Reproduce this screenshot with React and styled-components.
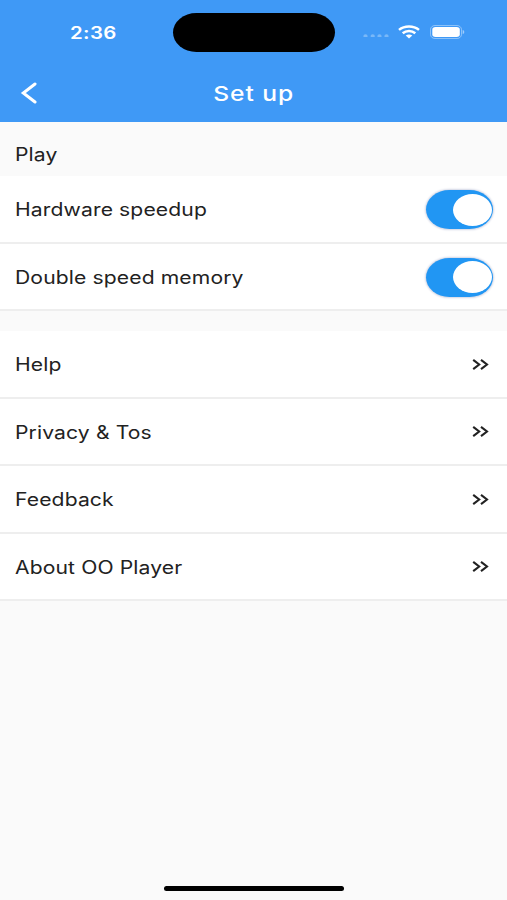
import { useState } from 'react';
import styled, { createGlobalStyle } from 'styled-components';

const GlobalStyle = createGlobalStyle`
    * {
        box-sizing: border-box;
    }
    body {
        margin: 0;
        background: #fafafa;
        font-family: Inter, "Liberation Sans", sans-serif;
    }
`;
const Page = styled.div`
    display: flex;
    flex-direction: column;
    width: 507px;
    height: 900px;
    overflow: hidden;
    background: #fafafa;
    color: #222;
`;
const Header = styled.header`
    display: flex;
    flex-direction: column;
    flex: none;
    height: 122px;
    background: #3f99f6;
    color: #fff;
`;
const StatusBar = styled.div`
    display: grid;
    grid-template-columns: 173px 162px 1fr;
    align-items: center;
    height: 64px;
`;
const Island = styled.div`
    height: 39px;
    border-radius: 24px / 20px;
    background: #000;
`;
const StatusIcons = styled.div`
    display: flex;
    align-items: center;
    padding-left: 28px;
`;
const NavBar = styled.div`
    display: grid;
    grid-template-columns: 60px 1fr 60px;
    align-items: center;
    height: 58px;
`;
const BackButton = styled.button`
    display: flex;
    padding: 0 0 0 20px;
    border: 0;
    background: none;
    color: inherit;
`;
// wide lettering, the same glyphs pulled out sideways
const Wide = styled.span`
    display: inline-block;
    padding-top: 1px;
    white-space: nowrap;
    font-size: ${({ $size }) => $size || 18}px;
    font-weight: ${({ $weight }) => $weight || 400};
    line-height: 24px;
    letter-spacing: ${({ $spacing }) => $spacing || 0.1}px;
    transform: scaleX(${({ $stretch }) => $stretch || 1.173});
    transform-origin: ${({ $origin }) => $origin || 'left'} center;
`;
const Time = styled.div`
    padding-left: 70px;
`;
const Title = styled.h1`
    display: flex;
    justify-content: center;
    margin: 0;
`;
const SectionTitle = styled.div`
    display: flex;
    align-items: center;
    flex: none;
    height: 54px;
    padding: 10px 15px 0;
`;
const List = styled.ul`
    flex: none;
    margin: 0 0 20px;
    padding: 0;
    list-style: none;
    background: #fff;
`;
const Row = styled.li`
    display: flex;
    align-items: center;
    justify-content: space-between;
    height: 67.5px;
    padding: 2px 14px 0 15px;
    border-bottom: 2px solid #eee;
`;
const Switch = styled.button`
    display: flex;
    align-items: center;
    justify-content: ${({ $on }) => ($on ? 'flex-end' : 'flex-start')};
    width: 67px;
    height: 39px;
    padding: 0 1px;
    border: 0;
    border-radius: 24px / 20px;
    background: ${({ $on }) => ($on ? '#2196f3' : '#ccc')};
    box-shadow: 0 0 2px 1px #d0d4e4;
`;
const Knob = styled.span`
    width: 39px;
    height: 32px;
    border-radius: 50%;
    background: #fff;
`;
const HomeIndicator = styled.div`
    flex: none;
    align-self: center;
    width: 180px;
    height: 5px;
    margin: auto 0 9px;
    border-radius: 3px;
    background: #000;
`;

const Signal = () => (
    <svg width="28" height="10" viewBox="0 0 28 10" fill="#fff" opacity="0.3">
        <ellipse cx="2.5" cy="9" rx="2.1" ry="1.8" />
        <ellipse cx="9.7" cy="9" rx="2.1" ry="1.8" />
        <ellipse cx="16.5" cy="9" rx="2.1" ry="1.8" />
        <ellipse cx="23.5" cy="9" rx="2.1" ry="1.8" />
    </svg>
);

const Wifi = () => (
    <svg width="22" height="14" viewBox="0 0 22 14" style={{ marginLeft: 7 }}>
        <g fill="none" stroke="#fff" strokeWidth="2.5">
            <path d="M1 4.9C6.5 .3 15.5 .3 21 4.9" />
            <path d="M4.7 8.3C8.2 5.2 13.8 5.2 17.3 8.3" />
        </g>
        <path d="M7.7 10.6C9.5 9 12.5 9 14.3 10.6L11 13.6Z" fill="#fff" />
    </svg>
);

const Battery = () => (
    <svg width="36" height="15" viewBox="0 0 36 15" style={{ marginLeft: 9 }}>
        <rect x="1.5" y=".5" width="31" height="13" rx="4.5" ry="4" fill="none" stroke="#fff" strokeOpacity="0.4" />
        <rect x="3.3" y="2" width="27.5" height="10" rx="3.2" ry="2.7" fill="#fff" />
        <path d="M33.7 5C35.8 5.6 35.8 8.6 33.7 9.2Z" fill="#fff" fillOpacity="0.5" />
    </svg>
);

const BackArrow = () => (
    <svg width="18" height="22" viewBox="0 0 18 22">
        <path d="M15 2L3.3 11L15 20" fill="none" stroke="#fff" strokeWidth="3" strokeLinecap="round" strokeLinejoin="miter" />
    </svg>
);

const More = () => (
    <svg width="22" height="14" viewBox="0 0 22 14">
        <path d="M2.2 1.8L8.2 6.5L2.2 11.2M10 1.8L16 6.5L10 11.2" fill="none" stroke="#222" strokeWidth="2.1" />
    </svg>
);

const links = ['Help', 'Privacy & Tos', 'Feedback', 'About OO Player'];

const App = () => {
    const [options, setOptions] = useState({
        'Hardware speedup': true,
        'Double speed memory': true,
    });

    const toggle = (name) => setOptions({ ...options, [name]: !options[name] });

    return (
        <Page>
            <GlobalStyle />
            <Header>
                <StatusBar>
                    <Time>
                        <Wide $size={17} $weight={600} $stretch={1.2} $spacing={0.3}>2:36</Wide>
                    </Time>
                    <Island />
                    <StatusIcons>
                        <Signal />
                        <Wifi />
                        <Battery />
                    </StatusIcons>
                </StatusBar>
                <NavBar>
                    <BackButton aria-label="Back"><BackArrow /></BackButton>
                    <Title>
                        <Wide $size={20.5} $weight={550} $stretch={1.2} $spacing={0.8} $origin="center">Set up</Wide>
                    </Title>
                </NavBar>
            </Header>
            <SectionTitle><Wide>Play</Wide></SectionTitle>
            <List>
                {Object.keys(options).map((name) => (
                    <Row key={name}>
                        <Wide>{name}</Wide>
                        <Switch $on={options[name]} onClick={() => toggle(name)} aria-label={name}>
                            <Knob />
                        </Switch>
                    </Row>
                ))}
            </List>
            <List>
                {links.map((name) => (
                    <Row key={name}>
                        <Wide>{name}</Wide>
                        <More />
                    </Row>
                ))}
            </List>
            <HomeIndicator />
        </Page>
    );
}

export default App;
